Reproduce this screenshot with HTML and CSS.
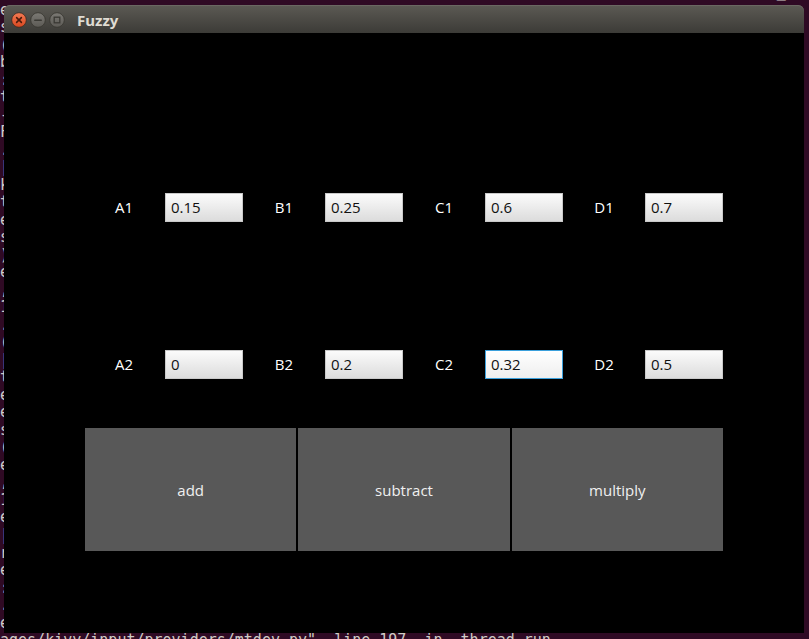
FILE: index.html
```html
<!DOCTYPE html>
<html>
<head>
<meta charset="utf-8">
<link rel="stylesheet" href="styles.css">
</head>
<body class="desktop">
<pre class="term">  File "/usr/lib/python2.7/dist-packages/kivy/input/providers/mtdev.py", line 197, in _
e
s
(
b
:
t
-
F
.
|
k
t
e
s
)
e
,
1
.
(
|
t
e
e
s
(
e
,
1
e
|
r
e
:
.
e
ages/kivy/input/providers/mtdev.py", line 197, in _thread_run</pre>

<div class="window">
  <div class="titlebar">
    <div class="wbtns">
      <svg class="wb" width="16" height="16" viewBox="0 0 16 16">
        <defs>
          <linearGradient id="gr" x1="0" y1="0" x2="0" y2="1">
            <stop offset="0" stop-color="#f47b54"/>
            <stop offset="1" stop-color="#d8471f"/>
          </linearGradient>
          <linearGradient id="gg" x1="0" y1="0" x2="0" y2="1">
            <stop offset="0" stop-color="#7b7974"/>
            <stop offset="1" stop-color="#5c5a55"/>
          </linearGradient>
        </defs>
        <circle cx="8" cy="8" r="7.3" fill="url(#gr)" stroke="#3a2a22" stroke-width="0.8"/>
        <path d="M5.6 5.6 L10.4 10.4 M10.4 5.6 L5.6 10.4" stroke="#4a1a0c" stroke-width="1.5" stroke-linecap="round"/>
      </svg>
      <svg class="wb" width="16" height="16" viewBox="0 0 16 16">
        <circle cx="8" cy="8" r="7.3" fill="url(#gg)" stroke="#36352f" stroke-width="0.8"/>
        <path d="M4.8 8.2 H11.2" stroke="#3a3934" stroke-width="1.6" stroke-linecap="round"/>
      </svg>
      <svg class="wb" width="16" height="16" viewBox="0 0 16 16">
        <circle cx="8" cy="8" r="7.3" fill="url(#gg)" stroke="#36352f" stroke-width="0.8"/>
        <rect x="5.2" y="5.2" width="5.6" height="5.6" fill="none" stroke="#3a3934" stroke-width="1.3"/>
      </svg>
    </div>
    <span class="title">Fuzzy</span>
  </div>
  <div class="content">
    <div class="row first">
      <span class="lbl">A1</span><div class="inp">0.15</div>
      <span class="lbl">B1</span><div class="inp">0.25</div>
      <span class="lbl">C1</span><div class="inp">0.6</div>
      <span class="lbl">D1</span><div class="inp">0.7</div>
    </div>
    <div class="row second">
      <span class="lbl">A2</span><div class="inp">0</div>
      <span class="lbl">B2</span><div class="inp">0.2</div>
      <span class="lbl">C2</span><div class="inp focus">0.32</div>
      <span class="lbl">D2</span><div class="inp">0.5</div>
    </div>
    <div class="btns">
      <div class="btn">add</div>
      <div class="btn">subtract</div>
      <div class="btn">multiply</div>
    </div>
  </div>
</div>
</body>
</html>
```

FILE: styles.css
```css
html, body {
  margin: 0;
  padding: 0;
}
.desktop {
  width: 809px;
  height: 639px;
  background: #2f0a24;
  overflow: hidden;
  position: relative;
}
.term {
  margin: -16px 0 0 0;
  font-family: "DejaVu Sans Mono", "Liberation Mono", monospace;
  font-size: 15px;
  line-height: 17.51px;
  color: #cfccc6;
  white-space: pre;
}
.window {
  position: absolute;
  left: 4px;
  top: 5px;
  width: 800px;
  height: 628px;
  display: flex;
  flex-direction: column;
}
.titlebar {
  height: 28px;
  flex: none;
  background: linear-gradient(#5c5a54, #3c3b37);
  border-radius: 6px 6px 0 0;
  display: flex;
  align-items: center;
  box-shadow: inset 0 1px 0 #6a6862;
}
.wbtns {
  display: flex;
  gap: 3px;
  margin-left: 7px;
  margin-top: 1px;
}
.wb {
  display: block;
}
.title {
  margin-left: 12px;
  font-family: "Noto Sans", "DejaVu Sans", sans-serif;
  font-weight: bold;
  font-size: 15px;
  color: #dfdbd2;
  margin-top: 2px;
}
.content {
  flex: 1;
  background: #000;
  padding: 160px 80px 0 80px;
  font-family: "Open Sans", "Noto Sans", sans-serif;
  font-size: 15px;
}
.row {
  display: grid;
  grid-template-columns: repeat(8, 80px);
  height: 29px;
}
.second {
  margin-top: 128px;
}
.lbl {
  color: #fff;
  text-align: center;
  line-height: 29px;
}
.inp {
  margin: 0 1px;
  box-sizing: border-box;
  height: 29px;
  background: linear-gradient(#fbfbfb, #dcdcdc);
  border: 1px solid #c9c9c9;
  color: #111;
  padding-left: 5px;
  line-height: 27px;
}
.inp.focus {
  background: linear-gradient(#ffffff, #eeeeee);
  border: 1px solid #3ba0dc;
}
.btns {
  margin-top: 49px;
  display: grid;
  grid-template-columns: repeat(3, 1fr);
  height: 123px;
}
.btn {
  margin: 0 1px;
  background: #585858;
  color: #f0f0f0;
  display: flex;
  align-items: center;
  justify-content: center;
}
```
